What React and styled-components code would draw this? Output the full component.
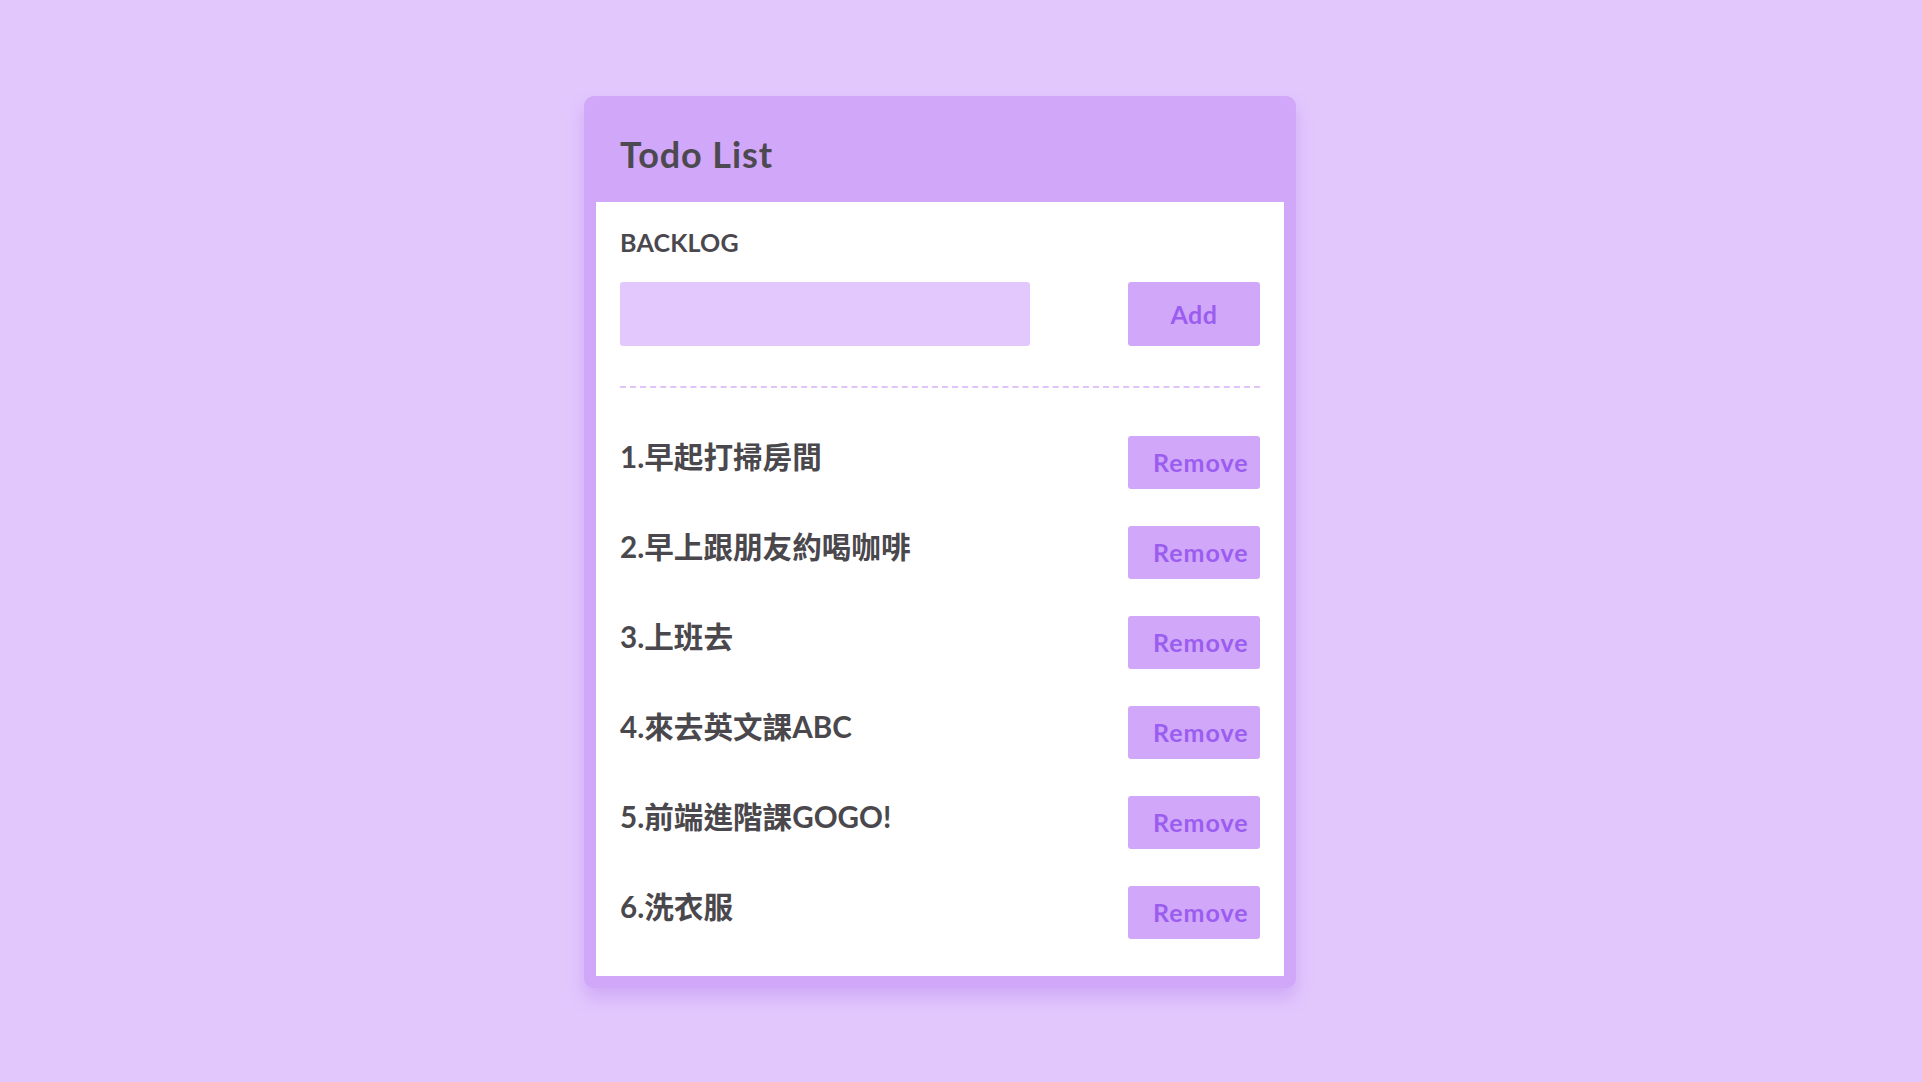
import React from "react";
import styled, { createGlobalStyle } from "styled-components";

const GlobalStyle = createGlobalStyle`
  html, body {
    margin: 0;
    padding: 0;
    background: #e2c7fd;
  }
  body {
    font-family: Lato, "Noto Sans CJK TC", sans-serif;
    min-height: 100vh;
  }
  * { box-sizing: border-box; }
`;

const Page = styled.div`
  display: flex;
  justify-content: center;
  padding: 96px 42px 0 0;
  min-height: 1082px;
`;

const Card = styled.section`
  width: 712px;
  background: #d1a7f9;
  border-radius: 10px;
  padding: 0 12px 12px;
  box-shadow: 0 10px 16px rgba(175, 120, 235, 0.35);
  align-self: flex-start;
`;

const Header = styled.header`
  height: 106px;
  padding: 36px 24px 0;
`;

const Title = styled.h1`
  margin: 0;
  font-family: Lato, "Noto Sans CJK TC", sans-serif;
  font-weight: 700;
  font-size: 36px;
  line-height: 44px;
  letter-spacing: 0.9px;
  color: #4c4a50;
`;

const Body = styled.div`
  background: #ffffff;
  padding: 25px 24px 0;
`;

const Label = styled.h2`
  margin: 0;
  font-size: 25px;
  line-height: 30px;
  font-weight: 700;
  color: #4a484e;
  letter-spacing: 0.2px;
`;

const InputRow = styled.div`
  display: flex;
  justify-content: space-between;
  margin-top: 25px;
`;

const TextInput = styled.input`
  width: 410px;
  height: 64px;
  border: none;
  border-radius: 3px;
  background: #e2c8fd;
  outline: none;
  font-size: 24px;
  padding: 0 16px;
`;

const Button = styled.button`
  width: 132px;
  height: ${(p) => (p.$tall ? "64px" : "53px")};
  border: none;
  border-radius: 3px;
  background: #d1a7f9;
  color: #9a5df0;
  font-family: Lato, sans-serif;
  font-weight: 700;
  font-size: 25px;
  letter-spacing: ${(p) => (p.$tall ? "0.5px" : "1px")};
  display: flex;
  align-items: center;
  justify-content: ${(p) => (p.$tall ? "center" : "flex-start")};
  padding: ${(p) => (p.$tall ? "0" : "0 0 2px 25px")};
  cursor: pointer;
  flex-shrink: 0;
`;

const Divider = styled.hr`
  margin: 40px 0 0;
  border: none;
  border-top: 2px dashed #dfc3fb;
  height: 0;
`;

const List = styled.ol`
  list-style: none;
  margin: 48px 0 0;
  padding: 0 0 37px;
  display: flex;
  flex-direction: column;
  gap: 37px;
`;

const Item = styled.li`
  display: flex;
  justify-content: space-between;
  align-items: flex-start;
`;

const ItemText = styled.span`
  margin-top: 3px;
  font-size: 29.6px;
  line-height: 36px;
  font-weight: 700;
  color: #4a484c;
`;

const todos = [
  "早起打掃房間",
  "早上跟朋友約喝咖啡",
  "上班去",
  "來去英文課ABC",
  "前端進階課GOGO!",
  "洗衣服",
];

export default function App() {
  return (
    <>
      <GlobalStyle />
      <Page>
        <Card>
          <Header>
            <Title>Todo List</Title>
          </Header>
          <Body>
            <Label>BACKLOG</Label>
            <InputRow>
              <TextInput type="text" />
              <Button $tall>Add</Button>
            </InputRow>
            <Divider />
            <List>
              {todos.map((t, i) => (
                <Item key={i}>
                  <ItemText>
                    {i + 1}.{t}
                  </ItemText>
                  <Button>Remove</Button>
                </Item>
              ))}
            </List>
          </Body>
        </Card>
      </Page>
    </>
  );
}
